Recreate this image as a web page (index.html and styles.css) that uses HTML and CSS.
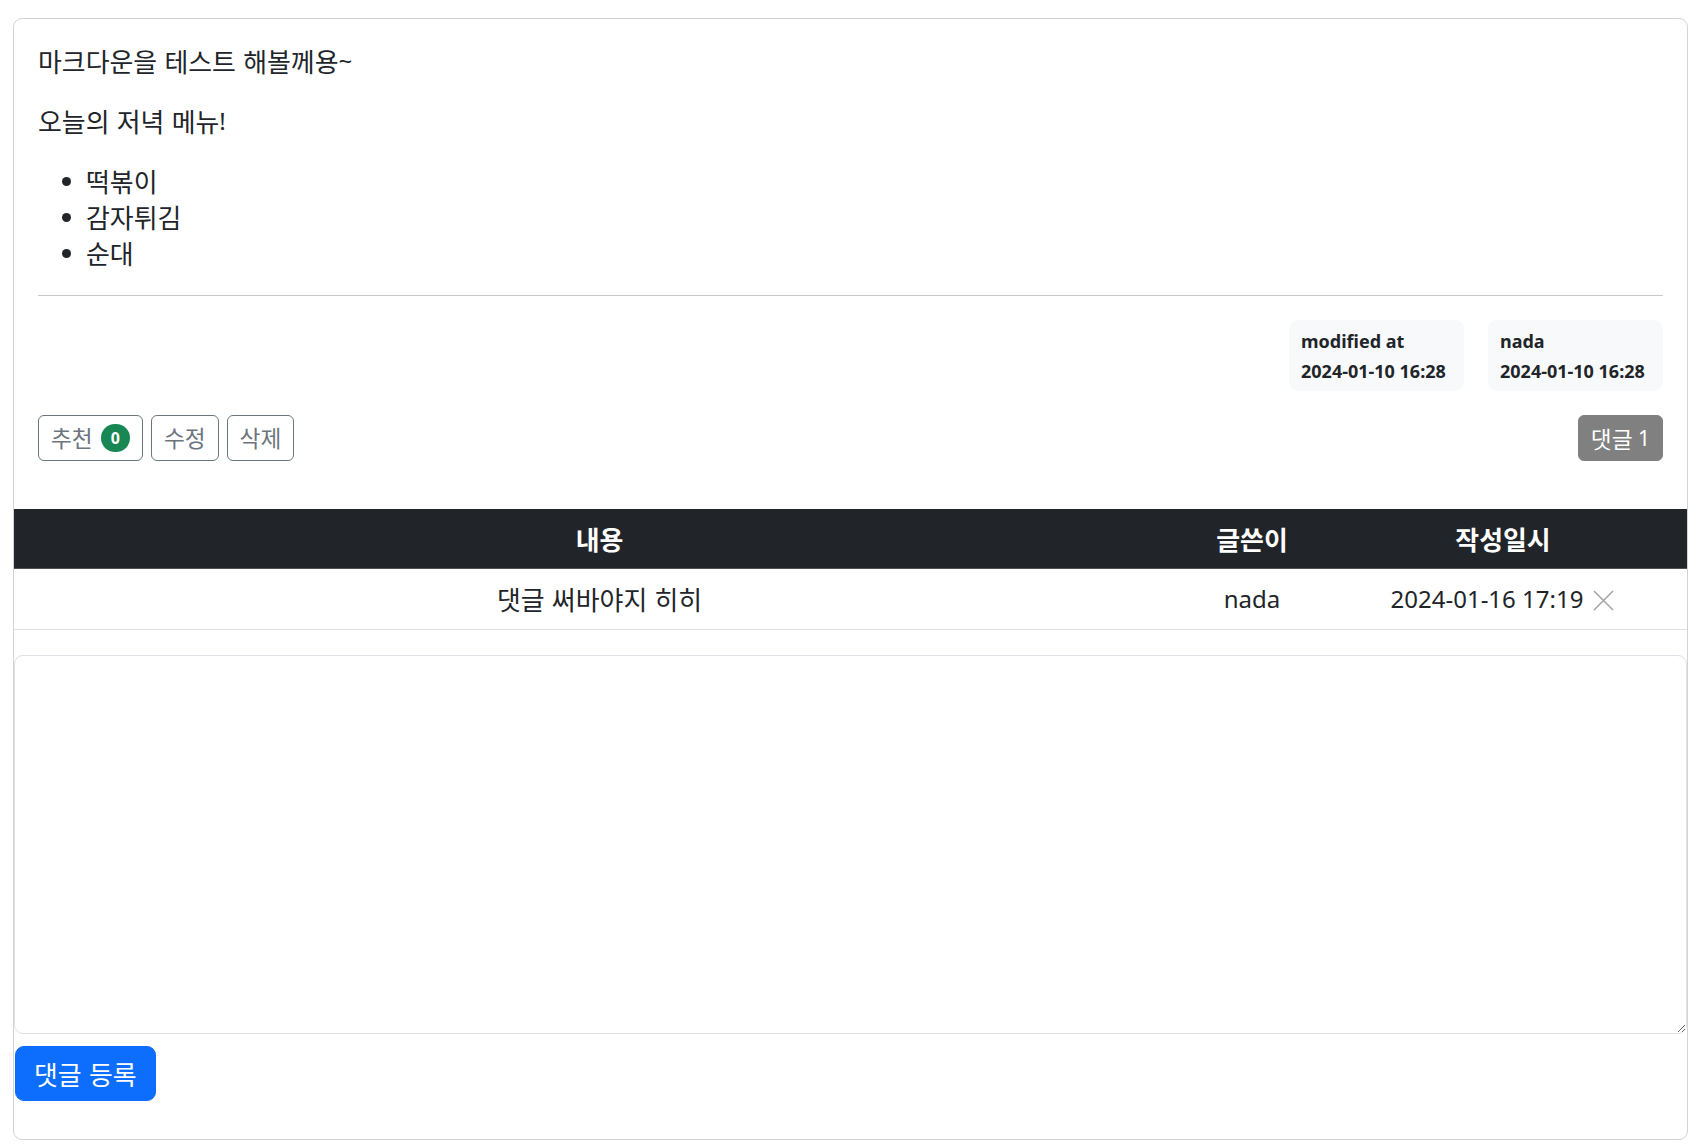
FILE: index.html
```html
<!DOCTYPE html>
<html lang="ko">
<head>
<meta charset="utf-8">
<title>게시글</title>
<link rel="stylesheet" href="styles.css">
</head>
<body>
<div class="page">
  <div class="card">
    <div class="card-body">
      <div class="markdown">
        <p><span class="ko">마크다운을 테스트 해볼께용</span>~</p>
        <p><span class="ko">오늘의 저녁 메뉴</span>!</p>
        <ul>
          <li><span class="ko">떡볶이</span></li>
          <li><span class="ko">감자튀김</span></li>
          <li><span class="ko">순대</span></li>
        </ul>
      </div>
      <hr class="divider">
      <div class="meta-row">
        <div class="meta-box">
          <div class="meta-line">modified at</div>
          <div class="meta-line">2024-01-10 16:28</div>
        </div>
        <div class="meta-box">
          <div class="meta-line">nada</div>
          <div class="meta-line">2024-01-10 16:28</div>
        </div>
      </div>
      <div class="action-row">
        <div class="action-left">
          <button class="btn-outline"><span class="ko">추천</span><span class="badge">0</span></button>
          <button class="btn-outline"><span class="ko">수정</span></button>
          <button class="btn-outline"><span class="ko">삭제</span></button>
        </div>
        <button class="btn-gray"><span class="ko">댓글</span> 1</button>
      </div>
    </div>
    <table class="comments">
      <thead>
        <tr>
          <th class="col-content"><span class="ko">내용</span></th>
          <th class="col-author"><span class="ko">글쓴이</span></th>
          <th class="col-date"><span class="ko">작성일시</span></th>
        </tr>
      </thead>
      <tbody>
        <tr>
          <td><span class="ko">댓글 써바야지 히히</span></td>
          <td>nada</td>
          <td><span class="date-text">2024-01-16 17:19</span><svg class="close-icon" width="23" height="21" viewBox="0 0 23 21"><path d="M2 1 L21 20 M21 1 L2 20" stroke="#a3a3a3" stroke-width="1.5" fill="none"/></svg></td>
        </tr>
      </tbody>
    </table>
    <form class="comment-form">
      <textarea class="comment-input"></textarea>
      <button type="button" class="btn-primary"><span class="ko">댓글 등록</span></button>
    </form>
  </div>
</div>
</body>
</html>
```
FILE: styles.css
```css
* { box-sizing: border-box; }
html, body { margin: 0; padding: 0; background: #fff; }
body {
  font-family: "Noto Sans", "Noto Sans CJK KR", sans-serif;
  font-size: 24px;
  line-height: 36px;
  color: #212529;
}
.ko {
  font-size: 1.08em;
  line-height: 1;
  vertical-align: -2px;
  font-family: "Noto Sans CJK KR", "Noto Sans", sans-serif;
}
.page { padding: 18px 20px 0 13px; }
.card {
  border: 1px solid #d3d3d3;
  border-radius: 9px;
  background: #fff;
  overflow: hidden;
}
.card-body { padding: 24px 24px 24px 24px; }
.markdown p { margin: 0 0 24px 0; }
.markdown ul { margin: 0 0 24px 0; padding-left: 48px; }
.divider {
  margin: 0 0 24px 0;
  border: 0;
  border-top: 1px solid #c8c9ca;
  height: 0;
}
.meta-row { display: flex; justify-content: flex-end; gap: 24px; }
.meta-box {
  background: #f8f9fa;
  border-radius: 9px;
  padding: 6px 12px 5px 12px;
  font-size: 18px;
  font-weight: 700;
  line-height: 30px;
  min-width: 175px;
}
.action-row {
  display: flex;
  justify-content: space-between;
  align-items: center;
  margin-top: 24px;
  margin-bottom: 24px;
}
.action-left { display: flex; gap: 8px; }
.btn-outline, .btn-gray, .btn-primary {
  font-family: inherit;
  cursor: pointer;
}
.btn-outline {
  display: inline-flex;
  align-items: center;
  gap: 8px;
  background: #fff;
  color: #6c757d;
  border: 1px solid #6c757d;
  border-radius: 6px;
  padding: 6px 12px;
  font-size: 21px;
  line-height: 32px;
  height: 46px;
}
.badge {
  display: inline-block;
  background: #198754;
  color: #fff;
  font-size: 16px;
  font-weight: 700;
  line-height: 18px;
  padding: 5px 10px;
  border-radius: 50px;
}
.btn-gray {
  background: #808080;
  color: #fff;
  border: 1px solid #808080;
  border-radius: 6px;
  padding: 6px 12px;
  font-size: 21px;
  line-height: 32px;
  height: 46px;
}
.comments {
  width: 100%;
  border-collapse: collapse;
  table-layout: fixed;
  margin-bottom: 25px;
}
.comments th {
  background: #212529;
  color: #fff;
  font-weight: 700;
  padding: 12px 8px 11px 8px;
  border-bottom: 1px solid #4d5154;
  text-align: center;
}
.comments td {
  padding: 12px 8px;
  text-align: center;
  border-bottom: 1px solid #dee2e6;
  white-space: nowrap;
}
.col-content { width: 70%; }
.col-author { width: 8%; }
.col-date { width: 22%; }
.close-icon { vertical-align: -3px; margin-left: 9px; }
.comment-form { padding-bottom: 38px; }
.comment-input {
  display: block;
  width: 100%;
  height: 379px;
  border: 1px solid #dee2e6;
  border-radius: 9px;
  font-family: inherit;
  font-size: 24px;
  padding: 9px 18px;
  margin: 0;
  resize: vertical;
}
.btn-primary {
  display: inline-block;
  margin-top: 12px;
  margin-left: 1px;
  background: #0d6efd;
  color: #fff;
  border: 1px solid #0d6efd;
  border-radius: 9px;
  padding: 8px 18px;
  font-size: 24px;
  line-height: 36px;
  height: 55px;
}
```
